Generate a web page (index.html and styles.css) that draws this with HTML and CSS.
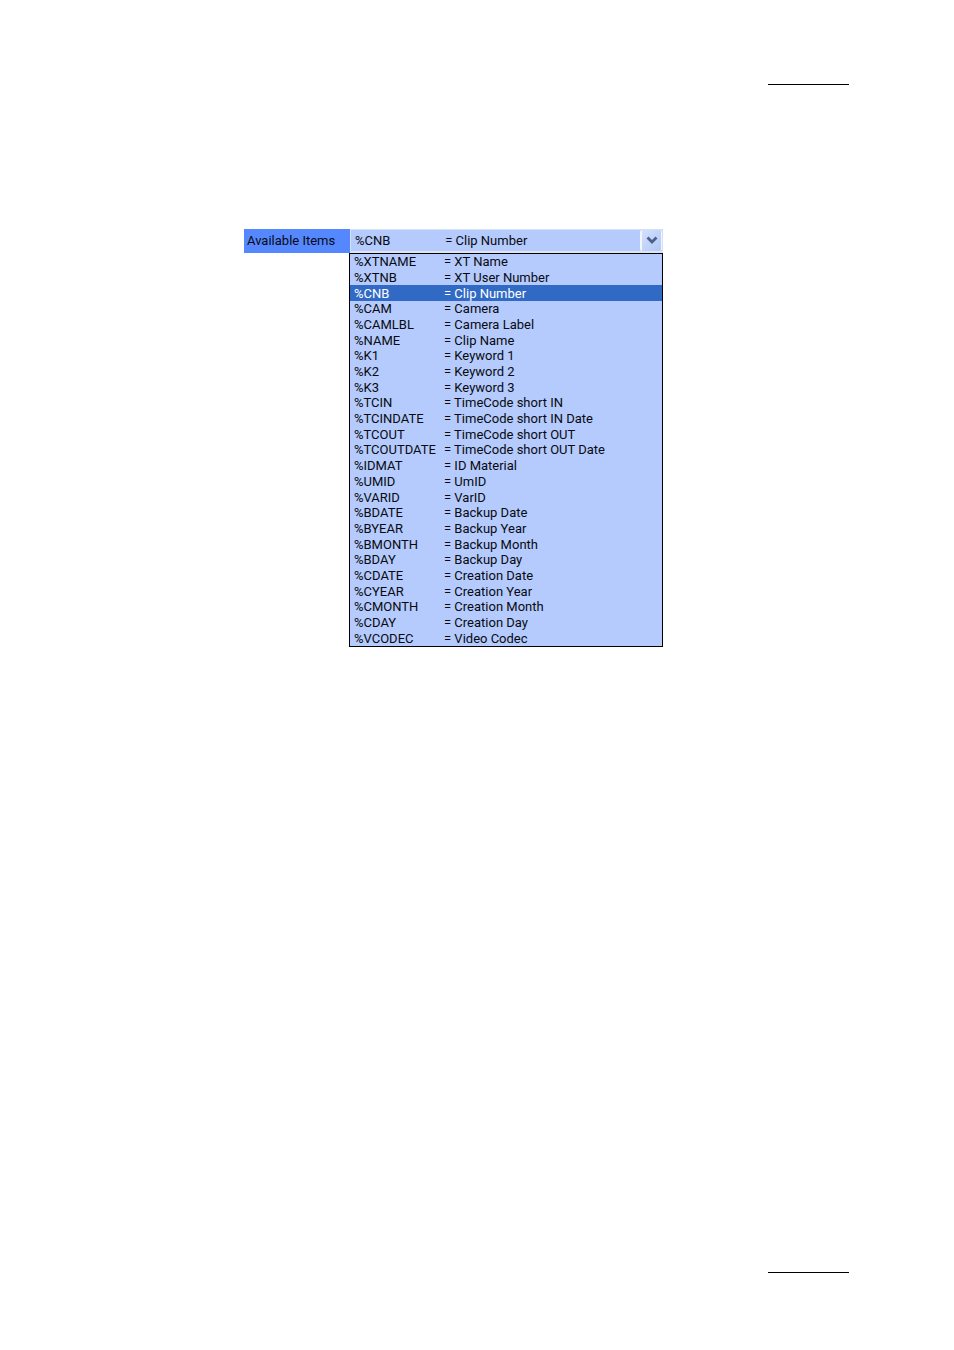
FILE: index.html
```
<!doctype html>
<html lang="en">
<head>
	<meta charset="UTF-8">
	<title>Available Items</title>
	<link rel="stylesheet" href="styles.css">
</head>
<body>
	<header class="page-head"><hr class="rule"></header>
	<main class="page-body">
		<div class="picker">
			<label class="picker__label" for="items">Available Items</label>
			<div class="picker__field">
				<select id="items" class="picker__select">
					<option>%CNB&nbsp;&nbsp;&nbsp;&nbsp;&nbsp;&nbsp;&nbsp;&nbsp;&nbsp;&nbsp;&nbsp;&nbsp;&nbsp;&nbsp;&nbsp;&nbsp;&nbsp;= Clip Number</option>
				</select>
				<span class="picker__arrow">
					<svg width="12" height="9" viewBox="0 0 12 9" aria-hidden="true"><path d="M1.500 1.500L6 6L10.500 1.500" fill="none" stroke="#4d6185" stroke-width="2.800"/></svg>
				</span>
			</div>
			<div class="picker__list" role="listbox" aria-label="Available Items">
				<button class="item" role="option"><span>%XTNAME</span><span>= XT Name</span></button>
				<button class="item" role="option"><span>%XTNB</span><span>= XT User Number</span></button>
				<button class="item item--active" role="option" aria-selected="true"><span>%CNB</span><span>= Clip Number</span></button>
				<button class="item" role="option"><span>%CAM</span><span>= Camera</span></button>
				<button class="item" role="option"><span>%CAMLBL</span><span>= Camera Label</span></button>
				<button class="item" role="option"><span>%NAME</span><span>= Clip Name</span></button>
				<button class="item" role="option"><span>%K1</span><span>= Keyword 1</span></button>
				<button class="item" role="option"><span>%K2</span><span>= Keyword 2</span></button>
				<button class="item" role="option"><span>%K3</span><span>= Keyword 3</span></button>
				<button class="item" role="option"><span>%TCIN</span><span>= TimeCode short IN</span></button>
				<button class="item" role="option"><span>%TCINDATE</span><span>= TimeCode short IN Date</span></button>
				<button class="item" role="option"><span>%TCOUT</span><span>= TimeCode short OUT</span></button>
				<button class="item" role="option"><span>%TCOUTDATE</span><span>= TimeCode short OUT Date</span></button>
				<button class="item" role="option"><span>%IDMAT</span><span>= ID Material</span></button>
				<button class="item" role="option"><span>%UMID</span><span>= UmID</span></button>
				<button class="item" role="option"><span>%VARID</span><span>= VarID</span></button>
				<button class="item" role="option"><span>%BDATE</span><span>= Backup Date</span></button>
				<button class="item" role="option"><span>%BYEAR</span><span>= Backup Year</span></button>
				<button class="item" role="option"><span>%BMONTH</span><span>= Backup Month</span></button>
				<button class="item" role="option"><span>%BDAY</span><span>= Backup Day</span></button>
				<button class="item" role="option"><span>%CDATE</span><span>= Creation Date</span></button>
				<button class="item" role="option"><span>%CYEAR</span><span>= Creation Year</span></button>
				<button class="item" role="option"><span>%CMONTH</span><span>= Creation Month</span></button>
				<button class="item" role="option"><span>%CDAY</span><span>= Creation Day</span></button>
				<button class="item" role="option"><span>%VCODEC</span><span>= Video Codec</span></button>
			</div>
		</div>
	</main>
	<footer class="page-foot"><hr class="rule"></footer>
</body>
</html>
```
FILE: styles.css
```
*{box-sizing:border-box;margin:0;padding:0}
body{display:flex;flex-direction:column;min-height:100vh;padding:84px 105px 77px;background:#fff;color:#080a10;font-family:Roboto,"Liberation Sans",sans-serif;font-size:13px;line-height:15px}
.rule{width:81px;margin-left:auto;border:0;border-top:1px solid #000}

.page-body{flex:1;padding:144px 81px 0 139px}

.picker{display:grid;grid-template-columns:106px minmax(0,313px)}
.picker__label{background:#5588ff;padding:4px 3px}
.picker__field{position:relative;height:24px;border:1px solid #d3e1f3;border-bottom:2px solid #dce6ee}
.picker__select{-webkit-appearance:none;appearance:none;display:block;width:100%;height:21px;padding:0 24px 0 4px;border:0;border-radius:0;background:#b5cbfd;color:inherit;font:inherit}
/* drop button on the right end of the select */
.picker__arrow{position:absolute;top:0;right:0;bottom:0;width:22px;display:flex;align-items:center;justify-content:center;border:2px solid #f2f6ff;border-width:0 1px 0 2px;border-radius:2px;background:linear-gradient(135deg,#d3e0ff,#b2c8f7);pointer-events:none}

.picker__list{grid-column:2;display:grid;grid-auto-rows:1fr;min-height:394px;margin-left:-1px;border:1px solid #000;background:#b5cbfd}
.item{display:grid;grid-template-columns:90px 1fr;align-items:center;padding:1px 0 0 4px;border:0;background:none;color:inherit;font:inherit;line-height:14px;text-align:left;white-space:nowrap}
.item--active{background:#316ac5;color:#fff}
```
